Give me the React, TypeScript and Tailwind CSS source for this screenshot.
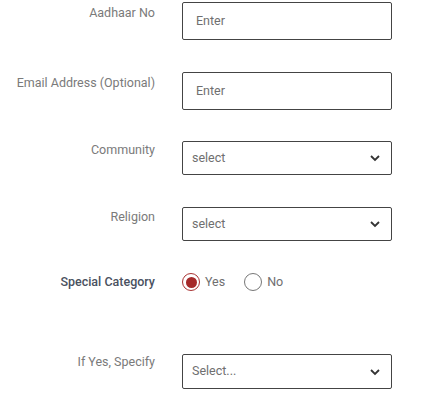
import React from "react";

function Chevron() {
  return (
    <svg width="12" height="8" viewBox="0 0 12 8" className="shrink-0">
      <path d="M2 2 L6 6 L10 2" fill="none" stroke="#333" strokeWidth="1.8" />
    </svg>
  );
}

function Label({ children, strong }: { children: React.ReactNode; strong?: boolean }) {
  return (
    <div
      className={
        "w-[155px] shrink-0 text-right text-[12.5px] leading-[16px] " +
        (strong ? "text-[#4a5160] font-medium" : "text-[#7a7a7a]")
      }
    >
      {children}
    </div>
  );
}

export default function App() {
  return (
    <div className="w-[432px] h-[401px] bg-white overflow-hidden" style={{ fontFamily: "Roboto, 'Liberation Sans', sans-serif" }}>
      <div className="flex flex-col pt-[2px]">
        <div className="flex items-start">
          <div className="pt-[3px]"><Label>Aadhaar No</Label></div>
          <div className="ml-[27px] w-[210px] h-[38px] border border-[#444] rounded-[2px] flex items-center pl-[13px] text-[12.5px] text-[#6f6f6f]">Enter</div>
        </div>
        <div className="flex items-start mt-[32px]">
          <div className="pt-[3px]"><Label>Email Address (Optional)</Label></div>
          <div className="ml-[27px] w-[210px] h-[38px] border border-[#444] rounded-[2px] flex items-center pl-[13px] text-[12.5px] text-[#6f6f6f]">Enter</div>
        </div>
        <div className="flex items-start mt-[31px]">
          <div className="pt-[1px]"><Label>Community</Label></div>
          <div className="ml-[27px] w-[210px] h-[34px] border border-[#444] rounded-[2px] flex items-center justify-between pl-[9px] pr-[10px] text-[12.5px] text-[#6f6f6f]">
            <span>select</span>
            <Chevron />
          </div>
        </div>
        <div className="flex items-start mt-[32px]">
          <div className="pt-[2px]"><Label>Religion</Label></div>
          <div className="ml-[27px] w-[210px] h-[34px] border border-[#444] rounded-[2px] flex items-center justify-between pl-[9px] pr-[10px] text-[12.5px] text-[#6f6f6f]">
            <span>select</span>
            <Chevron />
          </div>
        </div>
        <div className="flex items-center mt-[31px] h-[20px]">
          <Label strong>Special Category</Label>
          <div className="ml-[27px] flex items-center">
            <span className="w-[18px] h-[18px] rounded-full border-[1.5px] border-[#a83232] flex items-center justify-center">
              <span className="w-[11px] h-[11px] rounded-full bg-[#a52a2a]" />
            </span>
            <span className="ml-[5px] text-[12.5px] text-[#6f6f6f]">Yes</span>
            <span className="ml-[19px] w-[18px] h-[18px] rounded-full border border-[#777]" />
            <span className="ml-[5px] text-[12.5px] text-[#6f6f6f]">No</span>
          </div>
        </div>
        <div className="flex items-start mt-[62px]">
          <div className="pt-0"><Label>If Yes, Specify</Label></div>
          <div className="ml-[27px] w-[210px] h-[35px] border border-[#444] rounded-[2px] flex items-center justify-between pl-[9px] pr-[10px] text-[12.5px] text-[#6f6f6f]">
            <span>Select...</span>
            <Chevron />
          </div>
        </div>
      </div>
    </div>
  );
}
